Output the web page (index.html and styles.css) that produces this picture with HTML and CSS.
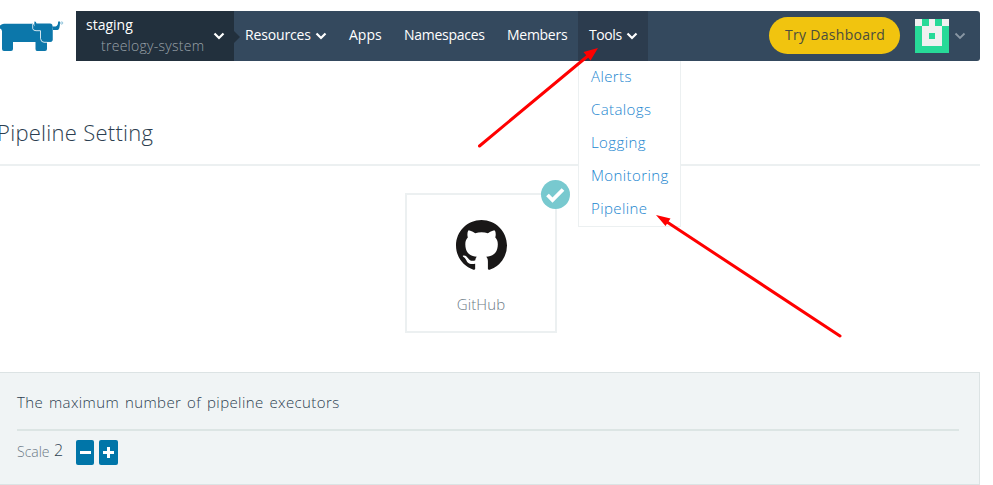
FILE: index.html
```html
<!DOCTYPE html>
<html lang="en">
<head>
<meta charset="utf-8">
<title>Pipeline Setting</title>
<link rel="stylesheet" href="styles.css">
</head>
<body>
<div class="page">
  <header class="header">
    <a class="logo">
      <svg width="76" height="50" viewBox="0 0 76 50">
        <path fill="#0c77aa" d="M0 14.500Q2 12.700 4 12.700H33Q34 15.500 37 16H52.500V29Q52.500 30.800 50.500 30.800H47V38Q47 40 45 40H37Q35.500 40 35.500 38V31H13V38Q13 40 11 40H4Q2 40 2 38V20Q1.500 17.500 0 17.500Z"/>
        <path fill="#0c77aa" d="M34.500 10.500Q36 10 36.500 12.500H50Q52.500 12.500 52.500 15V16.500H36.500Q33.500 16 34.500 10.500ZM52.500 15.500H55.500Q58 15 58.200 10.500H60Q60 19 57.500 19H52.500Z"/>
        <path fill="#0c77aa" d="M41 19H52.500V29Q52.500 30.800 50.500 30.800H44Q41 30 41 27Z"/>
        <path d="M32.700 13V17.500Q33 19.700 36 19.700H40.500V27.500Q41 31.300 44 31.300H47" fill="none" stroke="#fff" stroke-width=".8"/>
        <circle cx="61.700" cy="12" r="1.100" fill="none" stroke="#76b5d2" stroke-width=".8"/>
      </svg>
    </a>
    <nav class="bar">
      <a class="project"><span class="names"><span class="cluster">staging</span><span class="system">treelogy-system</span></span>
        <svg class="chev" width="12" height="8" viewBox="0 0 12 8"><path d="M1.500 1.500 6 6l4.500-4.500"/></svg></a>
      <a class="item resources"><span>Resources</span><svg class="chev" width="12" height="8" viewBox="0 0 12 8"><path d="M1.500 1.500 6 6l4.500-4.500"/></svg></a>
      <a class="item apps"><span>Apps</span></a>
      <a class="item namespaces"><span>Namespaces</span></a>
      <a class="item members"><span>Members</span></a>
      <div class="item tools"><span>Tools</span><svg class="chev" width="12" height="8" viewBox="0 0 12 8"><path d="M1.500 1.500 6 6l4.500-4.500"/></svg>
        <div class="menu"><a>Alerts</a><a>Catalogs</a><a>Logging</a><a>Monitoring</a><a>Pipeline</a></div>
      </div>
      <div class="user">
        <a class="try">Try Dashboard</a>
        <svg class="avatar" width="34" height="34" viewBox="0 0 34 34" shape-rendering="crispEdges"><path fill="#27da98" d="M0 0h34v34H0z"/><path fill="#f0f0f0" d="M0 0h7v7H0zM14 0h6v7h7v20H7V7h7zM27 0h7v7h-7z"/><path fill="#27da98" d="M14 14h6v6h-6z"/></svg>
        <svg class="chev dim" width="12" height="8" viewBox="0 0 12 8"><path d="M1.500 1.500 6 6l4.500-4.500"/></svg>
      </div>
    </nav>
  </header>
  <main>
    <h1><span>Pipeline Setting</span></h1>
    <div class="provider">
      <svg width="51" height="51" viewBox="0 0 16 16"><path fill="#191717" d="M8 0C3.580 0 0 3.580 0 8c0 3.540 2.290 6.530 5.470 7.590.4.070.55-.17.55-.38 0-.19-.01-.82-.01-1.490-2.010.37-2.530-.49-2.690-.94-.09-.23-.48-.94-.82-1.130-.28-.15-.68-.52-.01-.53.63-.01 1.080.58 1.230.82.72 1.210 1.870.87 2.330.66.070-.52.28-.87.51-1.070-1.780-.2-3.640-.89-3.640-3.950 0-.87.31-1.590.82-2.150-.08-.2-.36-1.020.08-2.120 0 0 .67-.21 2.200.82.64-.18 1.320-.27 2-.27s1.360.09 2 .27c1.530-1.040 2.200-.82 2.200-.82.44 1.100.16 1.920.08 2.120.51.56.82 1.270.82 2.150 0 3.070-1.870 3.750-3.650 3.950.29.25.54.73.54 1.480v2.200c0 .21.15.46.55.38A8 8 0 0 0 16 8c0-4.420-3.580-8-8-8z"/></svg>
      <span class="github">GitHub</span>
      <svg class="check" width="30" height="30" viewBox="0 0 30 30"><circle cx="14.500" cy="14.500" r="14.500" fill="#78c9cf"/><path d="m6.500 15 5 5L22 9.500" fill="none" stroke="#fff" stroke-width="3.800"/></svg>
    </div>
    <section class="panel">
      <h2><span>The maximum number of pipeline executors</span></h2>
      <div class="scale"><span class="label">Scale</span><span class="value">2</span>
        <button class="minus" aria-label="Decrease"><svg width="11" height="11" viewBox="0 0 11 11"><path d="M0 5.500h11"/></svg></button>
        <button class="plus" aria-label="Increase"><svg width="11" height="11" viewBox="0 0 11 11"><path d="M0 5.500h11M5.500 0v11"/></svg></button>
      </div>
    </section>
  </main>
  <svg class="arrows" width="993" height="485" viewBox="0 0 993 485"><g stroke="#f00" stroke-width="3" stroke-linecap="round"><path d="M479.500 146 589 55M840 336 667 222"/></g><path fill="#f00" d="m598 48-7.500 12.500-7-8.500zM656 215l14.500 3.500-5 7.500z"/></svg>
</div>
</body>
</html>
```
FILE: styles.css
```css
* { box-sizing: border-box; }
body { margin: 0; background: #fff; font-family: "Open Sans", sans-serif; font-weight: 300; color: #2c3e50; overflow: hidden; }
.page { position: relative; width: 993px; height: 485px; overflow: hidden; }
.header { display: flex; width: 980px; padding-top: 11px; }
.logo { width: 76px; height: 50px; flex: none; }
.logo svg { display: block; }
.bar { display: flex; flex: 1; height: 50px; background: #34495e; border-radius: 0 3px 3px 0; color: #fff; }
.project { position: relative; display: flex; align-items: center; width: 158px; padding: 0 9px 0 10px; background: #22303d; }
.project::after { content: ""; position: absolute; left: 158px; top: 20px; border: 6px solid transparent; border-left-color: #22303d; border-right: 0; }
.names { display: flex; flex-direction: column; flex: 1; font-size: 14px; line-height: 21px; white-space: nowrap; padding-bottom: 2px; }
.cluster { font-weight: 400; }
.system { padding-left: 15px; color: #9aa2a9; letter-spacing: .27px; }
.chev { fill: none; stroke: #fff; stroke-width: 2.200; flex: none; }
.dim { stroke: #8997a4; stroke-width: 1.800; }
.item { position: relative; display: flex; align-items: center; justify-content: space-between; padding: 0 11px; font-size: 14px; font-weight: 400; white-space: nowrap; }
.item > span { padding-bottom: 3px; }
.resources { width: 104px; letter-spacing: -.15px; }
.apps { width: 55px; }
.namespaces { width: 103px; letter-spacing: -.28px; }
.members { width: 82px; letter-spacing: -.28px; }
.tools { width: 70px; padding-right: 10px; background: #2c3c4e; letter-spacing: -.4px; }
.menu { position: absolute; top: 50px; left: 0; z-index: 2; display: flex; flex-direction: column; width: 103px; height: 166px; padding-left: 12px; background: #fff; border: 1px solid #ecf0f1; border-top: 0; color: #2186cf; font-size: 15px; font-weight: 300; line-height: 33px; letter-spacing: .4px; }
.menu a { height: 33px; margin-top: -1px; margin-bottom: 1px; }
.user { display: flex; align-items: center; margin-left: auto; padding-right: 14px; }
.try { width: 131px; height: 37px; margin: -1px 15px 0 0; padding-left: 16px; border-radius: 19px; background: #f1c40f; color: #4a4d3d; font-size: 14px; font-weight: 400; line-height: 36px; letter-spacing: .3px; white-space: nowrap; }
.avatar { margin-right: 5px; }
h1 { width: 980px; height: 105px; margin: 0; padding: 55px 0 0; border-bottom: 2px solid #ecf0f1; font-size: 22px; font-weight: 300; line-height: 32px; letter-spacing: .27px; }
h1 span { margin-left: -3px; }
.provider { position: relative; display: flex; flex-direction: column; align-items: center; width: 152px; height: 140px; margin: 27px 0 39px 405px; padding-top: 25px; border: 2px solid #ecf0f1; color: #6c7a86; font-size: 15px; line-height: 22px; }
.github { margin-top: 22px; letter-spacing: .1px; }
.check { position: absolute; left: 134px; top: -15px; }
.panel { width: 981px; height: 113px; margin-left: -1px; padding: 15px 20px 0 17px; border: 1px solid #dce3e4; background: #f0f4f5; }
h2 { height: 43px; margin: 0; border-bottom: 2px solid #dce5e4; font-size: 15px; font-weight: 300; line-height: 28px; letter-spacing: .4px; word-spacing: 1.500px; }
.scale { display: flex; align-items: center; height: 42px; }
.label { width: 37px; margin-top: -2px; color: #6c7a86; font-size: 14px; }
.value { width: 22px; margin-top: -4px; font-size: 16px; }
.scale button { display: grid; place-items: center; width: 19px; height: 25px; margin: 0; padding: 0; border: 0; border-radius: 2px; background: #0075a8; stroke: #fff; stroke-width: 3; }
.scale .minus { width: 18px; margin-right: 5px; }
.arrows { position: absolute; inset: 0; z-index: 3; pointer-events: none; }
```
